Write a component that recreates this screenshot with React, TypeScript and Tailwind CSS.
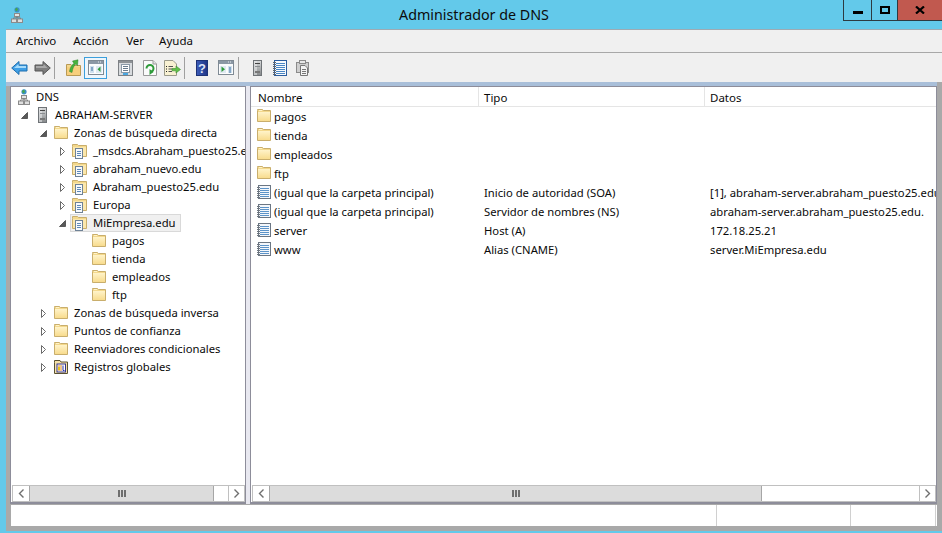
import React from "react";

const font = { fontFamily: '"Noto Sans", sans-serif' };

function FolderIcon() {
  return (
    <svg width="16" height="16" viewBox="0 0 16 16" className="block shrink-0">
      <defs>
        <linearGradient id="fold" x1="0" y1="0" x2="0" y2="1">
          <stop offset="0" stopColor="#fff3c9" />
          <stop offset="1" stopColor="#f8dc8e" />
        </linearGradient>
      </defs>
      <path d="M1.5 3.5 V2.5 H6.5 L7.5 3.5 H14.5 V14.5 H1.5 Z" fill="#f3d88c" stroke="#c9ae6c" />
      <rect x="2" y="5" width="12" height="9" fill="url(#fold)" />
      <path d="M3 3.5 H6" stroke="#fff3c9" />
    </svg>
  );
}

function TreeFolder() {
  return (
    <span className="block mb-[2px]">
      <FolderIcon />
    </span>
  );
}

function ZoneIcon() {
  return (
    <svg width="16" height="16" viewBox="0 0 16 16" className="block shrink-0">
      <path d="M0.5 3.5 V1.5 H5.5 L6.5 2.5 H14.5 V13.5 H0.5 Z" fill="#f3d88c" stroke="#c9ae6c" />
      <rect x="1" y="4" width="13" height="9" fill="#fbe7ac" />
      <rect x="3.5" y="5.5" width="7" height="10" fill="#f7fafd" stroke="#6f8296" />
      <path d="M5 8.5 H9 M5 10.5 H9 M5 12.5 H9" stroke="#5d88b8" />
    </svg>
  );
}

function RecordIcon() {
  return (
    <svg width="16" height="16" viewBox="0 0 16 16" className="block shrink-0">
      <rect x="2.5" y="1.5" width="12" height="13" fill="#f4f7fb" stroke="#6b7683" />
      <path d="M4 4.5 H13 M4 6.5 H13 M4 8.5 H13 M4 10.5 H13 M4 12.5 H13" stroke="#5c93c8" />
      <path d="M1 3.5 H4 M1 5.5 H4 M1 7.5 H4 M1 9.5 H4 M1 11.5 H4 M1 13.5 H4" stroke="#6e7680" />
    </svg>
  );
}

function DnsIcon() {
  return (
    <svg width="12" height="16" viewBox="0 0 12 16" className="block shrink-0">
      <circle cx="6" cy="2.8" r="2.6" fill="#3e8fc9" />
      <path d="M4 2 L6 0.5 L7 3 L5 4.5 Z" fill="#46a64a" />
      <rect x="3.5" y="6.5" width="5" height="3" fill="#e4e4e4" stroke="#8b8b8b" />
      <path d="M6 9.5 V11 M2.5 12 V11 H9.5 V12" stroke="#777" fill="none" />
      <rect x="0.5" y="12" width="5" height="3.5" fill="#dedede" stroke="#8b8b8b" />
      <rect x="6.5" y="12" width="5" height="3.5" fill="#dedede" stroke="#8b8b8b" />
    </svg>
  );
}

function ServerIcon() {
  return (
    <svg width="16" height="16" viewBox="0 0 16 16" className="block shrink-0">
      <defs>
        <linearGradient id="srv" x1="0" y1="0" x2="0" y2="1">
          <stop offset="0" stopColor="#d8dadb" />
          <stop offset="1" stopColor="#85888a" />
        </linearGradient>
      </defs>
      <rect x="4.5" y="0.5" width="8" height="15" fill="url(#srv)" stroke="#6f7377" />
      <rect x="5" y="1" width="3" height="14" fill="#e6e8e9" fillOpacity="0.6" />
      <path d="M6 3.5 H11" stroke="#444" />
      <path d="M6 6.5 H11" stroke="#8a8d90" />
      <rect x="6" y="11" width="5" height="2" fill="#777" />
    </svg>
  );
}

function GlobalIcon() {
  return (
    <svg width="16" height="16" viewBox="0 0 16 16" className="block shrink-0">
      <path d="M1.5 3.5 V1.5 H7 L8 3 H14.5 V14.5 H1.5 Z" fill="#f5e1a8" stroke="#5a5130" />
      <rect x="4" y="5" width="8.5" height="8" fill="#fff" stroke="#33358a" />
      <path d="M6 6 V12 M8 6 V12" stroke="#e08a1e" />
      <path d="M10 6.5 V11.5 M10 11.5 H11.5" stroke="#2533a8" />
      <rect x="5" y="8" width="2" height="3" fill="#e8c61c" />
    </svg>
  );
}

function Expander({ open }: { open?: boolean }) {
  return (
    <svg width="9" height="11" viewBox="0 0 9 11" className="block shrink-0">
      {open ? (
        <path d="M7.5 2.5 V8.5 H1.5 Z" fill="#595959" stroke="#595959" />
      ) : (
        <path d="M2.5 1.5 L6.5 5.5 L2.5 9.5 Z" fill="#fff" stroke="#6b6b6b" />
      )}
    </svg>
  );
}

type TreeRow = {
  label: string;
  pad: string;
  icon: React.ReactNode;
  arrow?: "open" | "closed";
  selected?: boolean;
  root?: boolean;
};

const tree: TreeRow[] = [
  { label: "DNS", pad: "pl-[7px]", icon: <DnsIcon />, root: true },
  { label: "ABRAHAM-SERVER", pad: "pl-[9px]", icon: <ServerIcon />, arrow: "open" },
  { label: "Zonas de búsqueda directa", pad: "pl-[28px]", icon: <TreeFolder />, arrow: "open" },
  { label: "_msdcs.Abraham_puesto25.edu", pad: "pl-[47px]", icon: <ZoneIcon />, arrow: "closed" },
  { label: "abraham_nuevo.edu", pad: "pl-[47px]", icon: <ZoneIcon />, arrow: "closed" },
  { label: "Abraham_puesto25.edu", pad: "pl-[47px]", icon: <ZoneIcon />, arrow: "closed" },
  { label: "Europa", pad: "pl-[47px]", icon: <ZoneIcon />, arrow: "closed" },
  { label: "MiEmpresa.edu", pad: "pl-[47px]", icon: <ZoneIcon />, arrow: "open", selected: true },
  { label: "pagos", pad: "pl-[80px]", icon: <TreeFolder /> },
  { label: "tienda", pad: "pl-[80px]", icon: <TreeFolder /> },
  { label: "empleados", pad: "pl-[80px]", icon: <TreeFolder /> },
  { label: "ftp", pad: "pl-[80px]", icon: <TreeFolder /> },
  { label: "Zonas de búsqueda inversa", pad: "pl-[28px]", icon: <TreeFolder />, arrow: "closed" },
  { label: "Puntos de confianza", pad: "pl-[28px]", icon: <TreeFolder />, arrow: "closed" },
  { label: "Reenviadores condicionales", pad: "pl-[28px]", icon: <TreeFolder />, arrow: "closed" },
  { label: "Registros globales", pad: "pl-[28px]", icon: <GlobalIcon />, arrow: "closed" },
];

function Tree() {
  return (
    <div className="flex-1 min-h-0 overflow-hidden pt-px">
      {tree.map((r) => (
        <div key={r.label} className={`flex items-center h-[18px] whitespace-nowrap ${r.pad}`}>
          {r.arrow ? <Expander open={r.arrow === "open"} /> : null}
          <div
            className={`flex items-center h-[18px] ${r.root ? "gap-[6px]" : "gap-[5px]"} ${
              r.selected
                ? "ml-[3px] pl-px pr-[4px] bg-[#f0f0f0] border border-[#d9d9d9]"
                : r.arrow
                ? "ml-[5px]"
                : ""
            }`}
          >
            {r.icon}
            <span className="text-[11.25px] text-[#0a0a0a]">{r.label}</span>
          </div>
        </div>
      ))}
    </div>
  );
}

function ScrollBar({ thumb }: { thumb: string }) {
  return (
    <div className="flex h-[17px] ml-[1px] border border-[#c0c0c0] bg-white items-stretch shrink-0">
      <div className="w-[16px] flex items-center justify-center shrink-0">
        <svg width="7" height="9" viewBox="0 0 7 9"><path d="M5.5 0.5 L1.5 4.5 L5.5 8.5" fill="none" stroke="#6f6f6f" strokeWidth="1.4" /></svg>
      </div>
      <div className={`${thumb} bg-[#dcdcdc] border-x border-[#a6a6a6] flex items-center justify-center gap-px shrink-0`}>
        <span className="w-[2px] h-[7px] bg-[#6f6f6f]" />
        <span className="w-[2px] h-[7px] bg-[#6f6f6f]" />
        <span className="w-[2px] h-[7px] bg-[#6f6f6f]" />
      </div>
      <div className="flex-1" />
      <div className="w-[16px] flex items-center justify-center shrink-0 border-l border-[#c0c0c0]">
        <svg width="7" height="9" viewBox="0 0 7 9"><path d="M1.5 0.5 L5.5 4.5 L1.5 8.5" fill="none" stroke="#6f6f6f" strokeWidth="1.4" /></svg>
      </div>
    </div>
  );
}

const records: { n: string; t: string; d: string; rec: boolean }[] = [
  { n: "pagos", t: "", d: "", rec: false },
  { n: "tienda", t: "", d: "", rec: false },
  { n: "empleados", t: "", d: "", rec: false },
  { n: "ftp", t: "", d: "", rec: false },
  { n: "(igual que la carpeta principal)", t: "Inicio de autoridad (SOA)", d: "[1], abraham-server.abraham_puesto25.edu.", rec: true },
  { n: "(igual que la carpeta principal)", t: "Servidor de nombres (NS)", d: "abraham-server.abraham_puesto25.edu.", rec: true },
  { n: "server", t: "Host (A)", d: "172.18.25.21", rec: true },
  { n: "www", t: "Alias (CNAME)", d: "server.MiEmpresa.edu", rec: true },
];

function ListPane() {
  return (
    <div className="flex-1 min-h-0 overflow-hidden text-[11.25px] text-[#0a0a0a]">
      <div className="flex h-[20px] border-b border-[#e5e5e5] items-center whitespace-nowrap text-[11.5px]">
        <div className="w-[228px] pl-[7px] pt-[2px] h-full flex items-center border-r border-[#e5e5e5] shrink-0">Nombre</div>
        <div className="w-[226px] pl-[5px] pt-[2px] h-full flex items-center border-r border-[#e5e5e5] shrink-0">Tipo</div>
        <div className="flex-1 pl-[5px] pt-[2px]">Datos</div>
      </div>
      {records.map((r, i) => (
        <div key={i} className="flex h-[19px] items-start whitespace-nowrap leading-[20px]">
          <div className="w-[228px] pl-[5px] flex items-start gap-[2px] shrink-0">
            <span className={r.rec ? "block mt-px" : "block"}>{r.rec ? <RecordIcon /> : <FolderIcon />}</span>
            <span>{r.n}</span>
          </div>
          <div className="w-[226px] pl-[5px] shrink-0">{r.t}</div>
          <div className="pl-[5px]">{r.d}</div>
        </div>
      ))}
    </div>
  );
}

function Sep() {
  return <span className="block w-px h-[22px] bg-[#a0a0a0] shrink-0" />;
}

function ToolIcon({ children, ml }: { children: React.ReactNode; ml: string }) {
  return <span className={`flex items-center justify-center shrink-0 ${ml}`}>{children}</span>;
}

const BackArrow = (
  <svg width="17" height="16" viewBox="0 0 17 16" className="block">
    <path d="M0.7 8 L8 1.5 V5 H16 V11 H8 V14.5 Z" fill="#3f9fe6" stroke="#1f6fae" />
    <path d="M3 8 L7.5 4 V6 H15 V8 Z" fill="#a7dcfb" />
  </svg>
);
const FwdArrow = (
  <svg width="17" height="16" viewBox="0 0 17 16" className="block">
    <path d="M16.3 8 L9 1.5 V5 H1 V11 H9 V14.5 Z" fill="#7d7d7d" stroke="#555" />
    <path d="M2 6 H9.5 V4 L13.5 8 H2 Z" fill="#a8a8a8" />
  </svg>
);
const UpFolder = (
  <svg width="15" height="17" viewBox="0 0 15 17" className="block">
    <path d="M0.5 5.5 H5 L6 6.5 H14.5 V16.5 H0.5 Z" fill="#f3d88f" stroke="#b99a55" />
    <rect x="1" y="8" width="13" height="8" fill="#f7cf7d" />
    <path d="M3.5 12.5 C4 8.5 6 5.5 8 4.5 L6.5 2 L12 0.8 L11.5 6.5 L9.8 5 C8 6.5 6.5 9.5 6 13.5 Z" fill="#47b33c" stroke="#2a7f2a" strokeWidth="0.5" />
  </svg>
);
const PaneToggle = (side: "left" | "right") => (
  <svg width="16" height="15" viewBox="0 0 16 15" className="block">
    <rect x="0.5" y="0.5" width="15" height="14" fill="#fbfcfd" stroke="#7f8a94" />
    <rect x="1" y="1" width="14" height="3" fill="#8b98a5" />
    <path d="M12 2 H13 M10 2 H11" stroke="#e8edf1" />
    {side === "left" ? (
      <>
        <rect x="2" y="6" width="4" height="7" fill="#cfe0ee" />
        <path d="M3 8 H5 M3 10 H5" stroke="#3d6f9e" />
        <rect x="8" y="6" width="6" height="7" fill="#dfe9f2" />
        <path d="M12.5 6.5 V12 L9.5 9.25 Z" fill="#2f9b3a" />
      </>
    ) : (
      <>
        <rect x="2" y="6" width="6" height="7" fill="#dfe9f2" />
        <path d="M3.5 6.5 V12 L7 9.25 Z" fill="#2f9b3a" />
        <rect x="10" y="6" width="4" height="7" fill="#cfe0ee" />
        <path d="M11 8 H13 M11 10 H13 M11 12 H13" stroke="#3d6f9e" />
      </>
    )}
  </svg>
);
const Props = (
  <svg width="15" height="16" viewBox="0 0 15 16" className="block">
    <rect x="0.5" y="0.5" width="14" height="15" fill="#d8dbde" stroke="#7d8185" />
    <rect x="1" y="1" width="13" height="2" fill="#8e9296" />
    <rect x="3.5" y="4.5" width="8" height="8" fill="#fff" stroke="#8b9aa8" />
    <path d="M5 6.5 H10 M5 8.5 H10 M5 10.5 H10" stroke="#6a7c8e" />
    <rect x="5" y="13" width="5" height="2" fill="#49a6e0" />
  </svg>
);
const Refresh = (
  <svg width="14" height="16" viewBox="0 0 14 16" className="block">
    <path d="M0.5 0.5 H10 L13.5 4 V15.5 H0.5 Z" fill="#fbfbfb" stroke="#9a9a9a" />
    <path d="M10 0.5 V4 H13.5" fill="#e4e4e4" stroke="#9a9a9a" />
    <path d="M3.5 8.5 A3.5 3.5 0 1 1 7 12" fill="none" stroke="#2f9b3a" strokeWidth="2" />
    <path d="M6.5 9 V15 L10.5 12 Z" fill="#2f9b3a" />
  </svg>
);
const ExportList = (
  <svg width="17" height="16" viewBox="0 0 17 16" className="block">
    <path d="M0.5 0.5 H9 L12.5 4 V15.5 H0.5 Z" fill="#f8f1d2" stroke="#9a9a8a" />
    <path d="M2 6.5 H3 M2 9 H3 M2 11.5 H3" stroke="#222" />
    <path d="M4.5 6.5 H9 M4.5 9 H8 M4.5 11.5 H8" stroke="#555" />
    <path d="M8 8.5 H12 V6 L16.5 9.5 L12 13 V10.8 H8 Z" fill="#62c14a" stroke="#3d8f33" strokeWidth="0.6" />
  </svg>
);
const Help = (
  <svg width="12" height="16" viewBox="0 0 12 16" className="block">
    <defs>
      <linearGradient id="hlp" x1="0" y1="0" x2="1" y2="0">
        <stop offset="0" stopColor="#3c5cb8" />
        <stop offset="1" stopColor="#1f3486" />
      </linearGradient>
    </defs>
    <rect x="0.5" y="0.5" width="11" height="15" fill="url(#hlp)" stroke="#1d3276" />
    <text x="6" y="12.5" textAnchor="middle" fontSize="13" fontWeight="700" fill="#dfe4f7" fontFamily="Liberation Sans">?</text>
  </svg>
);
const BlueBook = (
  <svg width="16" height="16" viewBox="0 0 16 16" className="block">
    <rect x="2.5" y="0.5" width="12" height="15" fill="#f7fafd" stroke="#2c5d9e" />
    <path d="M4 3.5 H13 M4 5.5 H13 M4 7.5 H13 M4 9.5 H13 M4 11.5 H13 M4 13.5 H13" stroke="#4a86c4" />
    <path d="M1 2.5 H4 M1 4.5 H4 M1 6.5 H4 M1 8.5 H4 M1 10.5 H4 M1 12.5 H4 M1 14.5 H4" stroke="#5e6670" />
  </svg>
);

export default function App() {
  return (
    <div className="w-[942px] h-[533px] bg-[#63c9ea] flex flex-col overflow-hidden" style={font}>
      {/* Title bar */}
      <div className="h-[29px] flex items-start shrink-0">
        <div className="w-[105px] pl-[11px] pt-[7px] shrink-0">
          <DnsIcon />
        </div>
        <div className="flex-1 text-center text-[14.3px] leading-[30px] text-[#0c0c0c]">Administrador de DNS</div>
        <div className="flex h-[21px] border-b border-l border-[#2d3a40] shrink-0">
          <div className="w-[28px] flex items-end justify-center pb-[6px] border-r border-[#2d3a40]">
            <span className="w-[10px] h-[3px] bg-black" />
          </div>
          <div className="w-[25px] flex items-start justify-center pt-[6px]">
            <span className="w-[10px] h-[8px] border-2 border-black" />
          </div>
          <div className="w-[45px] bg-[#c1594f] border-l border-[#2d3a40] flex items-start justify-center pt-[6px]">
            <svg width="10" height="8" viewBox="0 0 10 8">
              <path d="M1 0.5 L9 7.5 M9 0.5 L1 7.5" stroke="#000" strokeWidth="2.2" />
            </svg>
          </div>
        </div>
      </div>

      {/* Window body */}
      <div className="flex-1 min-h-0 ml-[6px] mb-[2px] flex flex-col bg-[#a9a9a9] border-t border-[#9eaab2]">
        <div className="h-[23px] bg-[#f0f0f0] flex items-center pl-[10px] text-[11.5px] text-[#0a0a0a] border-b border-[#a8a8a8] shrink-0">
          <span>Archivo</span>
          <span className="ml-[17px]">Acción</span>
          <span className="ml-[17.5px]">Ver</span>
          <span className="ml-[15px]">Ayuda</span>
        </div>
        <div className="h-[29px] bg-[#f0f0f0] flex items-center pl-[5px] shrink-0">
          <ToolIcon ml="">{BackArrow}</ToolIcon>
          <ToolIcon ml="ml-[6px]">{FwdArrow}</ToolIcon>
          <span className="ml-[3px]"><Sep /></span>
          <ToolIcon ml="ml-[11px]">{UpFolder}</ToolIcon>
          <span className="ml-[3px] w-[23px] h-[22px] border border-[#3c9fdc] bg-[#eef6fc] flex items-center justify-center shrink-0">
            {PaneToggle("left")}
          </span>
          <ToolIcon ml="ml-[11px]">{Props}</ToolIcon>
          <ToolIcon ml="ml-[10px]">{Refresh}</ToolIcon>
          <ToolIcon ml="ml-[7px]">{ExportList}</ToolIcon>
          <span className="ml-[3px]"><Sep /></span>
          <ToolIcon ml="ml-[11px]">{Help}</ToolIcon>
          <ToolIcon ml="ml-[10px]">{PaneToggle("right")}</ToolIcon>
          <span className="ml-[4px]"><Sep /></span>
          <ToolIcon ml="ml-[10px]"><ServerIcon /></ToolIcon>
          <ToolIcon ml="ml-[7px]">{BlueBook}</ToolIcon>
          <ToolIcon ml="ml-[7px]">
            <svg width="15" height="16" viewBox="0 0 15 16" className="block">
              <rect x="1.5" y="2.5" width="12" height="10" fill="#cfcfcf" stroke="#8b8b8b" />
              <rect x="4.5" y="0.5" width="6" height="3" fill="#e8e8e8" stroke="#8b8b8b" />
              <path d="M5.5 5.5 H10 L12.5 8 V15.5 H5.5 Z" fill="#f4f4f4" stroke="#777" />
              <path d="M7 9.5 H11 M7 11.5 H11 M7 13.5 H11" stroke="#777" />
            </svg>
          </ToolIcon>
        </div>
        <div className="h-[4px] mr-[5px] bg-[#a9bfd9] shrink-0" />

        {/* Panes */}
        <div className="h-[418px] flex pl-[4px] pr-[5px] shrink-0">
          <div className="w-[236px] bg-white border border-[#8d8d9a] border-b-2 flex flex-col min-w-0 overflow-hidden">
            <Tree />
            <ScrollBar thumb="w-[185px]" />
          </div>
          <div className="w-[4px] bg-[#e8e8f0] shrink-0" />
          <div className="flex-1 bg-white border border-[#8d8d9a] border-b-2 flex flex-col min-w-0 overflow-hidden">
            <ListPane />
            <ScrollBar thumb="w-[493px]" />
          </div>
        </div>

        {/* Status bar */}
        <div className="flex-1 min-h-0 pl-[5px] pr-[5px] pb-[5px] pt-px flex flex-col">
          <div className="flex-1 bg-white flex">
            <div className="w-[706px] border-r border-[#d0d0d0] shrink-0" />
            <div className="w-[134px] border-r border-[#d0d0d0] shrink-0" />
            <div className="w-[85px] border-r border-[#d0d0d0] shrink-0" />
          </div>
        </div>
      </div>
    </div>
  );
}
